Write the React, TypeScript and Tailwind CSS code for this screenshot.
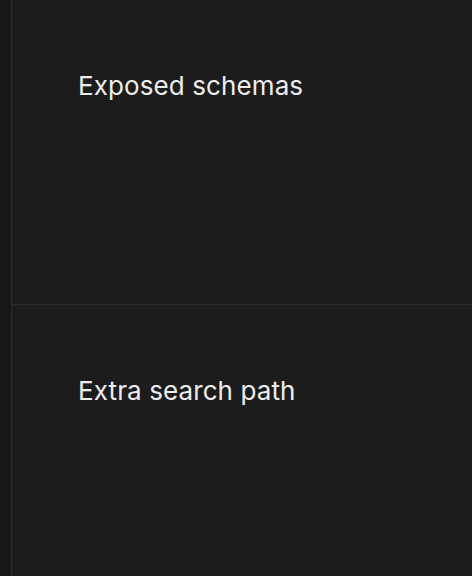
const sections = ['Exposed schemas', 'Extra search path'];

export default function App() {
  return (
    <div className="flex h-[576px] w-full overflow-hidden bg-[#1c1c1c] font-['Inter',sans-serif]">
      <div className="w-[12px] shrink-0 border-r border-[#2c2c2c] bg-[#171717]" />
      <div className="flex flex-1 flex-col">
        {sections.map((title) => (
          <section
            key={title}
            className="h-[305px] shrink-0 border-b border-[#2c2c2c] px-[66px] pt-[67px]"
          >
            <h3 className="text-[26px] leading-[38px] font-normal tracking-[0.1px] text-[#ededed]">
              {title}
            </h3>
          </section>
        ))}
      </div>
    </div>
  );
}
